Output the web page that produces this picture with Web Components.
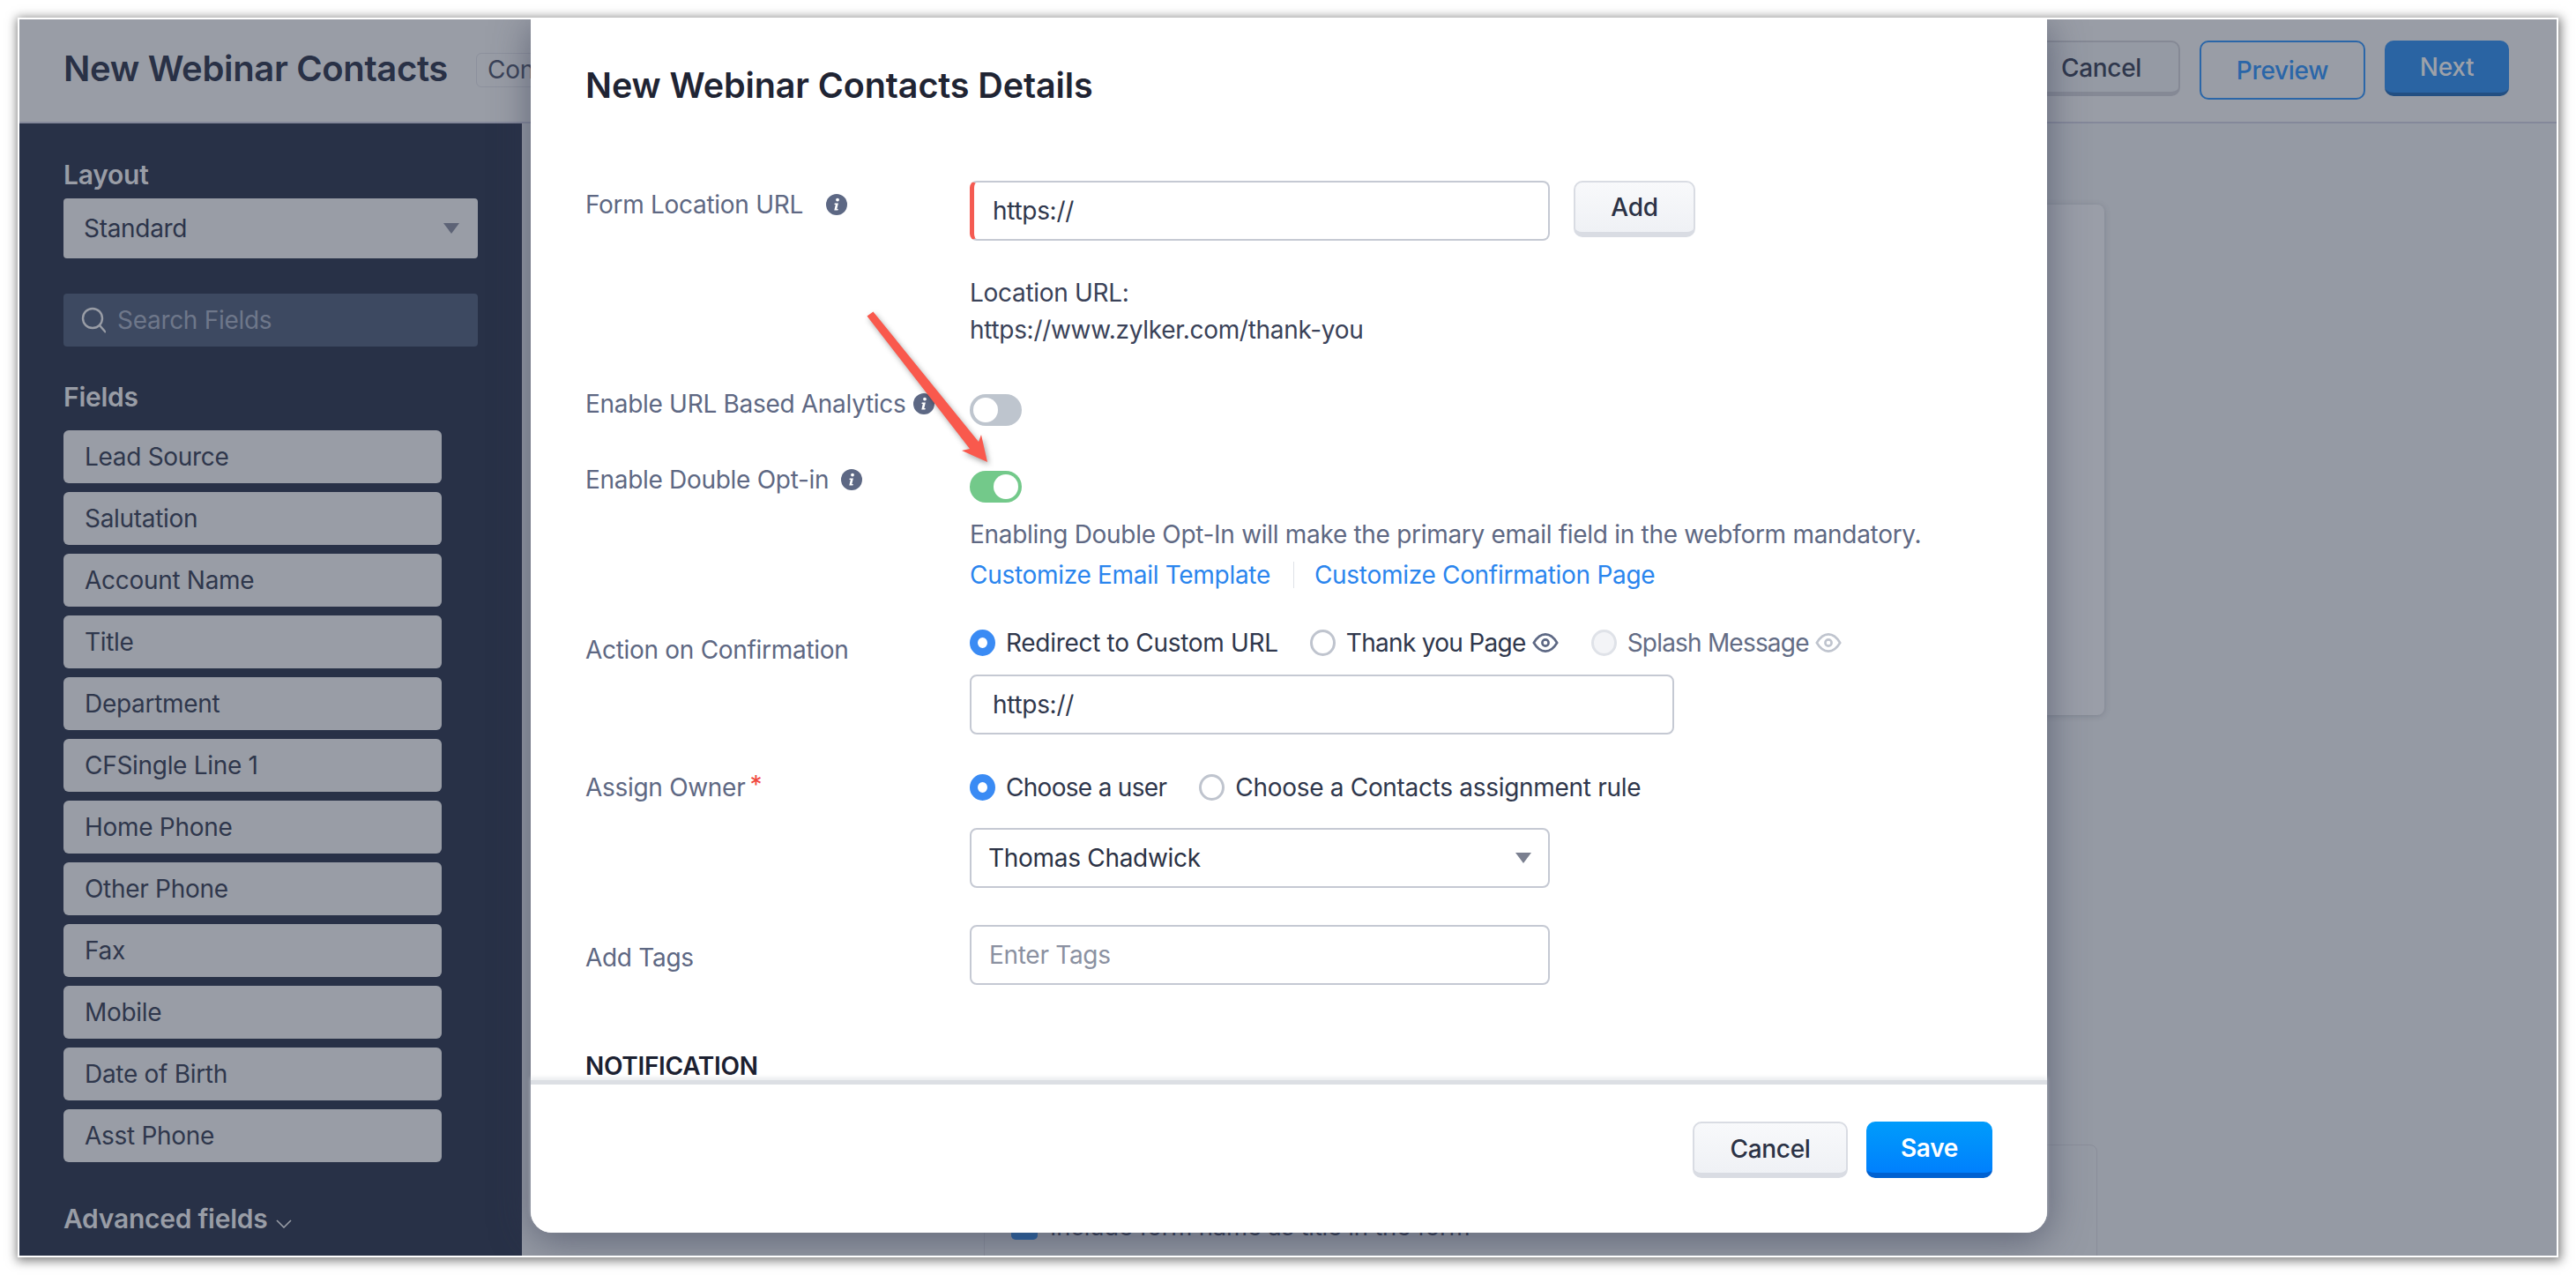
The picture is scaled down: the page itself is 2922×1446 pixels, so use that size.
<!DOCTYPE html>
<html>
<head>
<meta charset="utf-8">
<title>New Webinar Contacts</title>
<style>
    html, body { margin: 0; height: 1446px; overflow: hidden; background: #fff; }
    body { font-family: Inter, "Liberation Sans", sans-serif; font-size: 28px; letter-spacing: -.3px; }
</style>
</head>
<body>
<shot-frame>
    <top-bar slot="top" heading="New Webinar Contacts" chip="Contacts">
        <ui-button kind="dim">Cancel</ui-button>
        <ui-button kind="outline">Preview</ui-button>
        <ui-button kind="next">Next</ui-button>
    </top-bar>
    <side-panel slot="side">
        <field-chip>Lead Source</field-chip>
        <field-chip>Salutation</field-chip>
        <field-chip>Account Name</field-chip>
        <field-chip>Title</field-chip>
        <field-chip>Department</field-chip>
        <field-chip>CFSingle Line 1</field-chip>
        <field-chip>Home Phone</field-chip>
        <field-chip>Other Phone</field-chip>
        <field-chip>Fax</field-chip>
        <field-chip>Mobile</field-chip>
        <field-chip>Date of Birth</field-chip>
        <field-chip>Asst Phone</field-chip>
    </side-panel>
    <back-canvas slot="main"></back-canvas>

    <modal-dialog slot="over">
        <span slot="title">New Webinar Contacts Details</span>

        <form-row label="Form Location URL" info="gap" style="--top:83px;--label-top:7px">
            <div style="display:flex;gap:27px;align-items:flex-start">
                <text-field accent style="width:658px">https://</text-field>
                <ui-button kind="light" style="width:138px">Add</ui-button>
            </div>
        </form-row>
        <form-row style="--top:38px">
            <plain-note>Location URL:<br>https://www.zylker.com/thank-you</plain-note>
        </form-row>
        <form-row label="Enable URL Based Analytics" info="tight" style="--top:43px">
            <toggle-switch style="margin-top:9px"></toggle-switch>
        </form-row>
        <form-row label="Enable Double Opt-in" info="near" style="--top:41px">
            <toggle-switch on style="margin-top:10px"></toggle-switch>
            <plain-note muted style="margin-top:16px;line-height:40px">Enabling Double Opt-In will make the primary email field in the webform mandatory.</plain-note>
            <link-pair style="margin-top:6px">
                <span>Customize Email Template</span>
                <span slot="second">Customize Confirmation Page</span>
            </link-pair>
        </form-row>
        <form-row label="Action on Confirmation" style="--top:37px;--label-top:8px">
            <div style="display:flex">
                <radio-option checked style="margin-right:36px">Redirect to Custom URL</radio-option>
                <radio-option eye style="margin-right:37px;letter-spacing:-.7px">Thank you Page</radio-option>
                <radio-option eye disabled style="letter-spacing:-.8px">Splash Message</radio-option>
            </div>
            <text-field style="width:799px;margin-top:16px">https://</text-field>
        </form-row>
        <form-row label="Assign Owner" required style="--top:40px">
            <div style="display:flex">
                <radio-option checked style="margin-right:37px;letter-spacing:-.7px">Choose a user</radio-option>
                <radio-option>Choose a Contacts assignment rule</radio-option>
            </div>
            <select-field style="width:658px;margin-top:26px">Thomas Chadwick</select-field>
        </form-row>
        <form-row label="Add Tags" style="--top:42px;--label-top:17px">
            <text-field placeholder style="width:658px">Enter Tags</text-field>
        </form-row>
        <section-title style="margin-top:72px">NOTIFICATION</section-title>

        <ui-button slot="footer" kind="light" style="width:176px;padding-top:2px">Cancel</ui-button>
        <ui-button slot="footer" kind="primary" style="width:143px;padding-top:2px">Save</ui-button>
    </modal-dialog>

    <callout-arrow slot="over"></callout-arrow>
</shot-frame>

<script>
class ShadowEl extends HTMLElement {
    constructor () {
        super();
        this.attachShadow({mode: 'open'});
        this.shadowRoot.innerHTML = this.markup();
    }
    markup() { return '<slot></slot>'; }
}

class ShotFrame extends ShadowEl {
    markup() {
        return `<style>
            :host { display: block; box-sizing: border-box; position: relative; width: 2882px; height: 1406px; margin: 20px 0 0 20px;
                border: 2px solid #fff; box-shadow: 1px 2px 11px 2px rgba(0,0,0,.5); overflow: visible; }
            #clip { position: absolute; inset: 0; overflow: hidden; display: grid; grid-template: 118px 1fr / 570px 1fr; background: #959aa4; }
            #top { grid-column: 1 / 3; }
        </style>
        <div id="clip">
            <div id="top"><slot name="top"></slot></div>
            <slot name="side"></slot>
            <slot name="main"></slot>
            <slot name="over"></slot>
        </div>`;
    }
}

class TopBar extends ShadowEl {
    markup() {
        return `<style>
            :host { display: flex; box-sizing: border-box; height: 118px; padding: 24px 54px 0 50px; background: #999da6; border-bottom: 2px solid #84889a; gap: 22px; align-items: flex-start; }
            h1 { margin: 8px 37px 0 0; font: 600 40px/48px Inter, sans-serif; color: #293146; letter-spacing: -.35px; white-space: nowrap; }
            #chip { margin: 14px 0 0 -27px; padding: 0 12px; height: 39px; line-height: 37px; box-sizing: border-box; border: 1px solid #8d919d; border-radius: 6px; font-size: 28px; color: #3a4257; }
            #right { margin-left: auto; display: flex; gap: 22px; align-items: flex-start; }
        </style>
        <h1>${this.getAttribute('heading')}</h1><div id="chip">${this.getAttribute('chip')}</div>
        <div id="right"><slot></slot></div>`;
    }
}

class SidePanel extends ShadowEl {
    markup() {
        return `<style>
            :host { display: block; position: relative; z-index: 2; box-sizing: border-box; padding: 38px 50px 0; background: #283147; color: #999da6; overflow: hidden; }
            h2 { margin: 0; font: 600 30px/40px Inter, sans-serif; letter-spacing: -.25px; }
            #layout { margin-top: 7px; height: 68px; box-sizing: border-box; width: 470px; padding-left: 23px; padding-right: 21px; background: #999da6; border-radius: 4px; color: #2c344a; display: flex; align-items: center; justify-content: space-between; }
            #caret { width: 0; height: 0; border: 9px solid transparent; border-top: 12px solid #5d6376; border-bottom: 0; }
            #search { margin-top: 40px; height: 60px; box-sizing: border-box; width: 470px; padding-left: 20px; background: #3d4961; border-radius: 4px; display: flex; align-items: center; gap: 13px; color: #6e778a; }
            svg { width: 28px; height: 30px; }
            #fields { margin: 18px 0 44px; display: grid; gap: 10px; width: 429px; }
            #adv svg { width: 18px; height: 10px; margin-left: 9px; }
        </style>
        <h2>Layout</h2>
        <div id="layout"><span>Standard</span><span id="caret"></span></div>
        <div id="search">
            <svg viewBox="0 0 28 30" fill="none" stroke="#999da6" stroke-width="2.4"><circle cx="13" cy="13" r="11"/><path d="M21 21l7 8"/></svg>
            <span>Search Fields</span>
        </div>
        <h2 style="margin-top:37px">Fields</h2>
        <div id="fields"><slot></slot></div>
        <h2 id="adv">Advanced fields<svg viewBox="0 0 18 10" fill="none" stroke="#999da6" stroke-width="1.6"><path d="M1 1l8 8 8-8"/></svg></h2>`;
    }
}

class FieldChip extends ShadowEl {
    markup() {
        return `<style>
            :host { display: flex; align-items: center; box-sizing: border-box; height: 60px; padding-left: 24px; background: #999da6; border-radius: 6px; color: #2f374c; }
        </style><slot></slot>`;
    }
}

class BackCanvas extends ShadowEl {
    markup() {
        return `<style>
            :host { display: block; position: relative; background: #959aa4; }
            #card { box-sizing: border-box; margin: 92px 0 0 523px; width: 1272px; height: 579px; background: #9a9ea8; border-radius: 8px; box-shadow: 0 1px 6px rgba(60,65,85,.25); }
            #lower { box-sizing: border-box; margin: 487px 0 0 524px; width: 1263px; height: 200px; border: 1px solid #8a8e9a; border-radius: 8px; padding: 77px 0 0 30px; display: flex; gap: 14px; font-size: 27.5px; letter-spacing: -.2px; line-height: 36px; color: #2f374c; }
            #box { width: 30px; height: 30px; border-radius: 5px; background: #2a64a3; }
            #lower span:last-child { margin-top: -3px; }
        </style>
        <div id="card"></div>
        <div id="lower"><span id="box"></span><span>Include form name as title in the form</span></div>`;
    }
}

class UiButton extends ShadowEl {
    markup() {
        return `<style>
            :host { display: flex; align-items: center; justify-content: center; box-sizing: border-box; height: 64px; border-radius: 10px; white-space: nowrap; padding-bottom: 1px; flex: none; font-weight: 500; }
            :host([kind=light]) { background: linear-gradient(#f8f9fb, #eff1f5); border: 2px solid #d9dce3; border-bottom: 6px solid #d9dce3; color: #2b3245; }
            :host([kind=primary]) { background: linear-gradient(#009cfb, #0080fd); border-bottom: 6px solid #0061d1; color: #fff; font-weight: 600; }
            :host([kind=dim]) { width: 179px; height: 63px; padding-bottom: 0; padding-top: 1px; background: #959aa4; border: 2px solid #858995; border-bottom-width: 5px; color: #2f374c; }
            :host([kind=outline]) { width: 188px; height: 67px; padding-bottom: 0; border: 2px solid #2a66a8; color: #2a66a8; }
            :host([kind=next]) { width: 141px; height: 63px; padding-bottom: 0; padding-top: 1px; background: #2a64a3; border-bottom: 4px solid #234f82; color: #9da1a9; }
        </style><slot></slot>`;
    }
}

class ModalDialog extends ShadowEl {
    markup() {
        return `<style>
            :host { display: flex; flex-direction: column; position: absolute; z-index: 3; left: 580px; top: 0; width: 1720px; height: 1376px; background: #fff; border-radius: 0 0 24px 24px; box-shadow: 0 8px 44px rgba(50,55,80,.55); }
            #scroll { flex: 1; min-height: 0; overflow: hidden; padding: 50px 62px 0; }
            h1 { margin: 0; font: 600 39.5px/50px Inter, sans-serif; letter-spacing: -.1px; color: #1f2433; }
            footer { flex: none; height: 173px; box-sizing: border-box; border-top: 5px solid #dcdfe4; box-shadow: 0 -3px 4px rgba(220,223,228,.6); padding: 42px 62px 0 0; display: flex; justify-content: flex-end; gap: 21px; position: relative; background: #fff; border-radius: 0 0 24px 24px; }
        </style>
        <div id="scroll"><h1><slot name="title"></slot></h1><slot></slot></div>
        <footer><slot name="footer"></slot></footer>`;
    }
}

class FormRow extends ShadowEl {
    markup() {
        const label = this.getAttribute('label') || '';
        const info = this.getAttribute('info');
        const req = this.hasAttribute('required') ? '<b>*</b>' : '';
        const dot = info ? `<info-dot class="${info}"></info-dot>` : '';
        return `<style>
            :host { display: grid; grid-template-columns: 436px 1fr; margin-top: var(--top, 0); color: #2b3245; }
            #lab { padding-top: var(--label-top, 0); line-height: 40px; color: #5e6883; display: flex; align-items: center; align-self: start; white-space: nowrap; height: 40px; }
            b { color: #f0483e; margin: -6px 0 0 5px; font-weight: 400; }
            .gap { margin-left: 26px; }
            .near { margin-left: 14px; }
            .tight { margin-left: 8px; }
            #ctl { display: block; }
        </style>
        <div id="lab">${label}${req}${dot}</div>
        <div id="ctl"><slot></slot></div>`;
    }
}

class InfoDot extends ShadowEl {
    markup() {
        return `<style>:host { display: inline-block; width: 24px; height: 24px; flex: none; } svg { display: block; }</style>
        <svg width="24" height="24" viewBox="0 0 24 24"><circle cx="12" cy="12" r="12" fill="#5d6884"/><circle cx="13" cy="6.6" r="1.9" fill="#fff"/><path d="M9.8 10.4h4.1l-1.6 6.6h1.5l-.4 1.6H9.3l1.5-6.6H9.4z" fill="#fff"/></svg>`;
    }
}

class ToggleSwitch extends ShadowEl {
    markup() {
        return `<style>
            :host { display: flex; box-sizing: border-box; width: 59px; height: 36px; padding: 4px; border-radius: 18px; background: #bec5ce; }
            :host([on]) { background: #73c98a; justify-content: flex-end; }
            i { display: block; width: 28px; height: 28px; border-radius: 50%; background: #fff; }
        </style><i></i>`;
    }
}

class RadioOption extends ShadowEl {
    markup() {
        const eye = this.hasAttribute('eye') ? `<svg width="30" height="24" viewBox="0 0 30 24" fill="none" stroke="currentColor" stroke-width="2.6"><path d="M1.8 12C6 5 10 2.4 15 2.4S24 5 28.2 12C24 19 20 21.6 15 21.6S6 19 1.8 12z"/><circle cx="15" cy="12" r="3.6"/></svg>` : '';
        return `<style>
            :host { display: flex; align-items: center; height: 40px; white-space: nowrap; color: #2f374c; }
            i { display: block; box-sizing: border-box; width: 29px; height: 30px; border-radius: 50%; border: 3px solid #bfc4ce; background: #fff; margin-right: 12px; }
            :host([checked]) i { border: 9px solid #3a8bf4; }
            :host([disabled]) i { border-color: #dfe2e8; background: #f3f4f7; }
            :host([disabled]) { color: #636c85; }
            svg { margin-left: 7px; color: #5d6884; }
            :host([disabled]) svg { color: #bfc4ce; }
        </style><i></i><slot></slot>${eye}`;
    }
}

class TextField extends ShadowEl {
    markup() {
        return `<style>
            :host { display: flex; align-items: center; box-sizing: border-box; height: 68px; padding: 0 0 0 24px; border: 2px solid #c5c9d3; border-radius: 8px; background: #fff; color: #2f374c; }
            :host([accent]) { border-left: 5px solid #f45b52; padding-left: 21px; }
            :host([placeholder]) { color: #8b91a1; padding-left: 20px; }
        </style><slot></slot>`;
    }
}

class SelectField extends ShadowEl {
    markup() {
        return `<style>
            :host { display: flex; align-items: center; justify-content: space-between; box-sizing: border-box; height: 68px; padding: 0 19px 0 19px; border: 2px solid #c5c9d3; border-radius: 8px; color: #2b3245; }
            i { width: 0; height: 0; border: 9px solid transparent; border-top: 12px solid #7b8090; border-bottom: 0; }
        </style><span><slot></slot></span><i></i>`;
    }
}

class PlainNote extends ShadowEl {
    markup() {
        return `<style>
            :host { display: block; line-height: 42px; color: #3a4258; white-space: nowrap; }
            :host([muted]) { color: #5e6883; }
        </style><slot></slot>`;
    }
}

class LinkPair extends ShadowEl {
    markup() {
        return `<style>
            :host { display: flex; align-items: center; height: 40px; color: #2a85ee; white-space: nowrap; }
            i { width: 1px; height: 30px; background: #dfe2e8; margin: 0 23px 0 26px; }
        </style><slot></slot><i></i><slot name="second"></slot>`;
    }
}

class SectionTitle extends ShadowEl {
    markup() {
        return `<style>
            :host { display: block; font-weight: 600; line-height: 40px; color: #1b2030; }
        </style><slot></slot>`;
    }
}

class CalloutArrow extends ShadowEl {
    markup() {
        // sits over the form, coordinates are the picture's own minus the frame
        return `<style>
            :host { position: absolute; z-index: 4; left: 938px; top: 314px; width: 170px; height: 210px; pointer-events: none; }
            svg { display: block; overflow: visible; filter: drop-shadow(2px 3px 3px rgba(0,0,0,.35)); }
        </style>
        <svg width="170" height="210" viewBox="960 336 170 210"><path d="M983.5 358.5L990.5 353.5 1110 501 1113 493 1120 524 1091 511 1100 509Z" fill="#f9594d"/></svg>`;
    }
}

customElements.define('shot-frame', ShotFrame);
customElements.define('top-bar', TopBar);
customElements.define('side-panel', SidePanel);
customElements.define('field-chip', FieldChip);
customElements.define('back-canvas', BackCanvas);
customElements.define('ui-button', UiButton);
customElements.define('modal-dialog', ModalDialog);
customElements.define('form-row', FormRow);
customElements.define('info-dot', InfoDot);
customElements.define('toggle-switch', ToggleSwitch);
customElements.define('radio-option', RadioOption);
customElements.define('text-field', TextField);
customElements.define('select-field', SelectField);
customElements.define('plain-note', PlainNote);
customElements.define('link-pair', LinkPair);
customElements.define('section-title', SectionTitle);
customElements.define('callout-arrow', CalloutArrow);
</script>
</body>
</html>
